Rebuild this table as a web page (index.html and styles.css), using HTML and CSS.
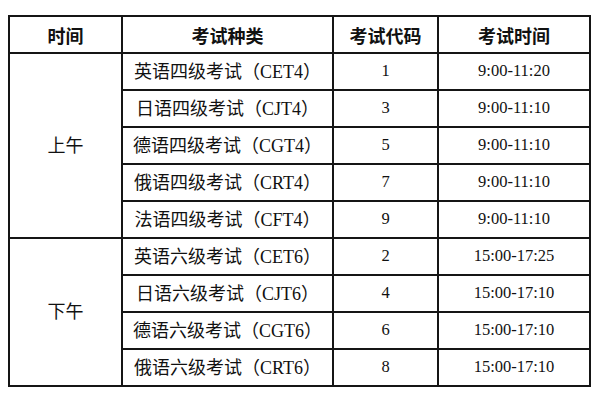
FILE: index.html
```html
<!DOCTYPE html>
<html lang="zh-CN">
<head>
<meta charset="utf-8">
<title>考试时间安排</title>
<link rel="stylesheet" href="styles.css">
</head>
<body>
<div class="page">
  <table class="schedule">
    <colgroup>
      <col class="c-time">
      <col class="c-type">
      <col class="c-code">
      <col class="c-hours">
    </colgroup>
    <thead>
      <tr><th>时间</th><th>考试种类</th><th>考试代码</th><th>考试时间</th></tr>
    </thead>
    <tbody>
      <tr><td rowspan="5" class="period">上午</td><td class="type">英语四级考试（CET4）</td><td class="num">1</td><td class="num">9:00-11:20</td></tr>
      <tr><td class="type">日语四级考试（CJT4）</td><td class="num">3</td><td class="num">9:00-11:10</td></tr>
      <tr><td class="type">德语四级考试（CGT4）</td><td class="num">5</td><td class="num">9:00-11:10</td></tr>
      <tr><td class="type">俄语四级考试（CRT4）</td><td class="num">7</td><td class="num">9:00-11:10</td></tr>
      <tr><td class="type">法语四级考试（CFT4）</td><td class="num">9</td><td class="num">9:00-11:10</td></tr>
      <tr><td rowspan="4" class="period">下午</td><td class="type">英语六级考试（CET6）</td><td class="num">2</td><td class="num">15:00-17:25</td></tr>
      <tr><td class="type">日语六级考试（CJT6）</td><td class="num">4</td><td class="num">15:00-17:10</td></tr>
      <tr><td class="type">德语六级考试（CGT6）</td><td class="num">6</td><td class="num">15:00-17:10</td></tr>
      <tr><td class="type">俄语六级考试（CRT6）</td><td class="num">8</td><td class="num">15:00-17:10</td></tr>
    </tbody>
  </table>
</div>
</body>
</html>
```

FILE: styles.css
```css
html, body {
  margin: 0;
  padding: 0;
  background: #ffffff;
}

.page {
  padding: 15px 0 0 8px;
}

.schedule {
  border-collapse: collapse;
  table-layout: fixed;
  width: 581px;
  color: #111;
  font-family: "Liberation Serif", "Times New Roman", "Noto Sans CJK SC", serif;
}

.c-time { width: 113px; }
.c-type { width: 211px; }
.c-code { width: 105px; }
.c-hours { width: 152px; }

.schedule th,
.schedule td {
  border: 2px solid #151515;
  padding: 0;
  text-align: center;
  vertical-align: middle;
  height: 35px;
  line-height: 1;
}

.schedule th {
  font-family: "Noto Sans CJK SC", sans-serif;
  font-weight: 700;
  font-size: 18px;
}

.type,
.period {
  font-size: 18px;
  font-weight: 400;
}

.num {
  font-size: 16.5px;
}
```
